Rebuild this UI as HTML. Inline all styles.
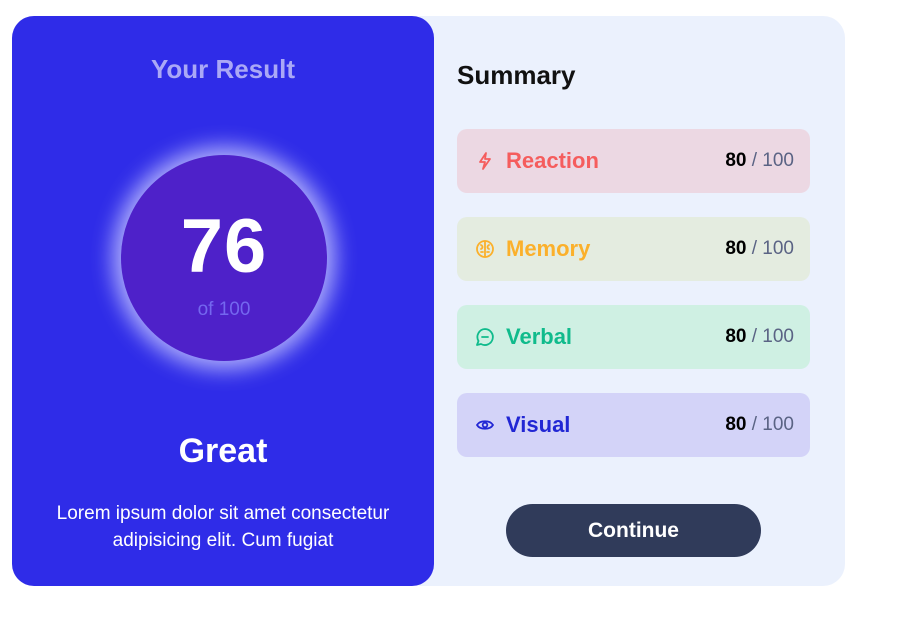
<!DOCTYPE html>
<html><head><style>
*{margin:0;padding:0;box-sizing:border-box}
body{width:897px;height:618px;background:#fff;font-family:"Liberation Sans",sans-serif;position:relative;overflow:hidden}
.right{position:absolute;left:400px;top:16px;width:445px;height:570px;background:#ebf1fd;border-radius:22px}
.left{position:absolute;left:12px;top:16px;width:422px;height:570px;background:#2f2ce8;border-radius:22px;text-align:center;color:#fff}
.yr{position:absolute;top:38px;width:100%;font-size:26px;font-weight:bold;color:#aaa8f6}
.circle{position:absolute;left:109px;top:139px;width:206px;height:206px;border-radius:50%;background:#4e21c9;box-shadow:0 0 22px 8px rgba(200,200,255,.85)}
.n{position:absolute;top:48px;width:100%;font-size:76px;font-weight:bold;letter-spacing:1px}
.of{position:absolute;top:144px;width:100%;font-size:19px;color:#7467ef}
.great{position:absolute;top:416px;width:100%;font-size:34px;font-weight:bold}
.lorem{position:absolute;top:484px;left:20px;right:20px;font-size:19px;line-height:27px}
h2{position:absolute;left:457px;top:60px;font-size:26px;font-weight:bold;color:#111}
.row{position:absolute;left:457px;width:353px;height:64px;border-radius:10px;display:flex;align-items:center;padding:0 16px 0 18px;font-size:22px;font-weight:bold}
.row svg{width:20px;height:20px;margin-right:11px;fill:none;stroke-width:1.8;stroke-linecap:round;stroke-linejoin:round}
.sc{margin-left:auto;font-size:19px;color:#000}
.sc span{font-weight:normal;color:#5a6384}
.btn{position:absolute;left:506px;top:504px;width:255px;height:53px;border-radius:27px;background:#303b5a;color:#fff;font-size:21px;font-weight:bold;text-align:center;line-height:53px}
</style></head><body>
<div class="right"></div>
<div class="left">
<div class="yr">Your Result</div>
<div class="circle"><div class="n">76</div><div class="of">of 100</div></div>
<div class="great">Great</div>
<div class="lorem">Lorem ipsum dolor sit amet consectetur adipisicing elit. Cum fugiat</div>
</div>
<h2>Summary</h2>
<div class="row" style="top:129px;background:#ecd8e3;color:#f55d5d"><svg viewBox="0 0 20 20" stroke="#f55d5d"><path d="M11 2 L5 11 H10 L8 18 L15 8 H10 Z"/></svg>Reaction<div class="sc">80 <span>/ 100</span></div></div>
<div class="row" style="top:217px;background:#e4ece0;color:#fbb02b"><svg viewBox="0 0 20 20" stroke="#fbb02b"><circle cx="10" cy="10" r="8"/><path d="M10 2V18M6 6c2 1 2 3 0 4M14 6c-2 1-2 3 0 4M6 13h2M12 13h2"/></svg>Memory<div class="sc">80 <span>/ 100</span></div></div>
<div class="row" style="top:305px;background:#cff0e3;color:#10bb8c"><svg viewBox="0 0 20 20" stroke="#10bb8c"><path d="M10 2a8 8 0 1 1-4 15L2 18l1.5-4A8 8 0 0 1 10 2z"/><path d="M7 10h6"/></svg>Verbal<div class="sc">80 <span>/ 100</span></div></div>
<div class="row" style="top:393px;background:#d3d3f8;color:#2126d4"><svg viewBox="0 0 20 20" stroke="#2126d4"><path d="M2 10c3-5 13-5 16 0c-3 5-13 5-16 0z"/><circle cx="10" cy="10" r="2.3"/></svg>Visual<div class="sc">80 <span>/ 100</span></div></div>
<div class="btn">Continue</div>
</body></html>
